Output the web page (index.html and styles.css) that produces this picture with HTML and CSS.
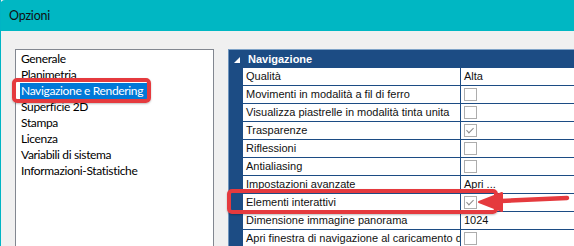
FILE: index.html
```html
<!DOCTYPE html>
<html lang="it">
<head>
  <meta charset="UTF-8">
  <title>Opzioni</title>
  <link rel="stylesheet" href="styles.css">
</head>
<body>
  <div class="window">
    <div class="titlebar">Opzioni</div>
    <div class="content">
      <ul class="pages">
        <li>Generale</li>
        <li>Planimetria</li>
        <li><span class="selected">Navigazione e Rendering</span></li>
        <li>Superficie 2D</li>
        <li>Stampa</li>
        <li>Licenza</li>
        <li>Variabili di sistema</li>
        <li>Informazioni-Statistiche</li>
      </ul>

      <div class="grid">
        <div class="category">
          <svg class="toggle" width="6" height="6" viewBox="0 0 6 6"><path d="M6 0V6H0Z" fill="#fff"/></svg>
          Navigazione
        </div>
        <div class="row"><div class="name">Qualità</div><div class="value">Alta</div></div>
        <div class="row"><div class="name">Movimenti in modalità a fil di ferro</div><div class="value"><span class="check"></span></div></div>
        <div class="row"><div class="name">Visualizza piastrelle in modalità tinta unita</div><div class="value"><span class="check"></span></div></div>
        <div class="row"><div class="name">Trasparenze</div><div class="value"><span class="check on"></span></div></div>
        <div class="row"><div class="name">Riflessioni</div><div class="value"><span class="check"></span></div></div>
        <div class="row"><div class="name">Antialiasing</div><div class="value"><span class="check"></span></div></div>
        <div class="row"><div class="name">Impostazioni avanzate</div><div class="value">Apri ...</div></div>
        <div class="row"><div class="name">Elementi interattivi</div><div class="value"><span class="check on"></span></div></div>
        <div class="row"><div class="name">Dimensione immagine panorama</div><div class="value">1024</div></div>
        <div class="row"><div class="name">Apri finestra di navigazione al caricamento d</div><div class="value"><span class="check"></span></div></div>
      </div>
    </div>

    <!-- annotations -->
    <div class="mark mark-page"></div>
    <div class="mark mark-row"></div>
    <svg class="arrow" width="100" height="30" viewBox="0 0 100 30">
      <path d="M92 11 L26 14" stroke="#e53a3e" stroke-width="4.5" stroke-linecap="round" fill="none"/>
      <path d="M4 15 L27 6 L27 24 Z" fill="#e53a3e" stroke="#e53a3e" stroke-width="2" stroke-linejoin="round"/>
    </svg>
  </div>
</body>
</html>
```

FILE: styles.css
```css
body {
  margin: 0;
  width: 574px;
  height: 246px;
  overflow: hidden;
  background: #f0f0f0;
}

.window {
  position: relative;
  height: 246px;
  overflow: hidden;
  border-left: 1px solid #00b4c4;
  background: #f0f0f0;
}

.titlebar {
  height: 31px;
  margin-left: -1px;
  padding-left: 9px;
  background: #00b7c3;
  border-top-left-radius: 5px;
  color: #111;
  font-family: "Lato", "Liberation Sans", sans-serif;
  font-size: 12.5px;
  letter-spacing: -0.2px;
  line-height: 31px;
}

.content {
  display: flex;
  gap: 14px;
  padding: 18px 0 0 14px;
}

.pages {
  width: 192px;
  height: 196px;
  margin: 0;
  padding: 1px 0 0 5px;
  list-style: none;
  background: #fff;
  border: 1px solid #828790;
  border-bottom: 0;
  font-family: "Lato", "Liberation Sans", sans-serif;
  font-size: 12px;
  letter-spacing: -0.35px;
  color: #000;
}

.pages li {
  height: 16px;
  line-height: 16px;
}

.pages .selected {
  display: inline-block;
  padding: 0 4px 0 1px;
  margin-left: -1px;
  background: #0078d7;
  color: #fff;
}

.grid {
  flex: 1;
  height: 196px;
  overflow: hidden;
  background: #1c4c84;
  border-top: 1px solid #7fa3c8;
  border-left: 1px solid #6f95bd;
  font-family: "Liberation Sans", Arial, sans-serif;
  font-size: 11px;
}

.category {
  display: flex;
  align-items: center;
  height: 18px;
  padding-left: 5px;
  gap: 8px;
  color: #fff;
  font-weight: bold;
}

.toggle {
  margin-top: 1px;
}

.row {
  display: grid;
  grid-template-columns: 217px 1fr;
  gap: 1px;
  margin-left: 14px;
  margin-bottom: 1px;
  height: 17px;
}

.name,
.value {
  background: #fff;
  color: #111;
  line-height: 17px;
  white-space: nowrap;
  overflow: hidden;
}

.name {
  padding-left: 3px;
}

.value {
  padding-left: 3px;
}

.check {
  display: inline-block;
  position: relative;
  width: 11px;
  height: 11px;
  margin-top: 2px;
  vertical-align: top;
  border: 1px solid #adadad;
  background: #fff;
}

.check.on::after {
  content: "";
  position: absolute;
  left: 3px;
  top: 1px;
  width: 3px;
  height: 6px;
  border: solid #8a8a8a;
  border-width: 0 1.5px 1.5px 0;
  transform: rotate(45deg);
}

.mark {
  position: absolute;
  border: 4px solid #e53a3e;
  border-radius: 5px;
  box-shadow: 0 1px 2px rgba(0, 0, 0, 0.25);
}

.mark-page {
  left: 11px;
  top: 78px;
  width: 131px;
  height: 17px;
}

.mark-row {
  left: 226px;
  top: 189px;
  width: 263px;
  height: 17px;
}

.arrow {
  position: absolute;
  left: 474px;
  top: 187px;
}
```
